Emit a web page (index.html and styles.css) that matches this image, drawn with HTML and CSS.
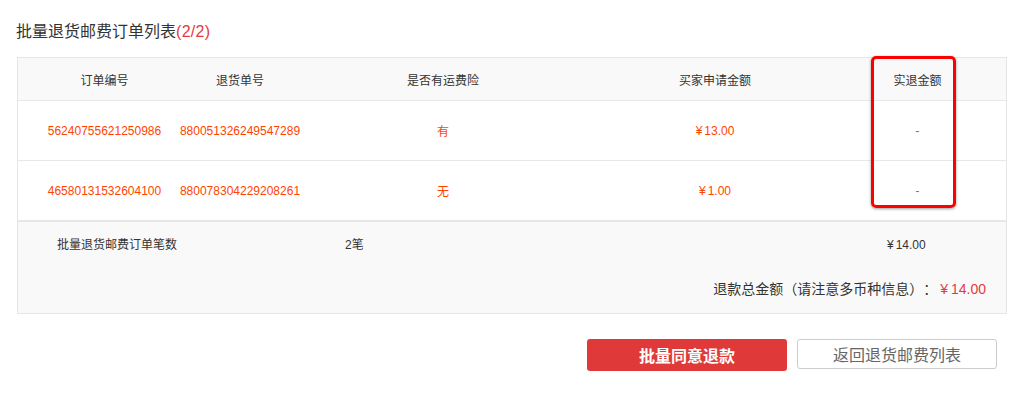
FILE: index.html
```html
<!DOCTYPE HTML>
<html>
	<head>
		<title>批量退货邮费订单列表</title>
		<meta charset="utf-8" />
		<link rel="stylesheet" href="styles.css">
	</head>
	<body>
		<div class="page">
			<h2 class="page-title">批量退货邮费订单列表<span class="count">(2/2)</span></h2>

			<div class="order-box">
				<table class="order-table">
					<thead>
						<tr>
							<th class="col-order">订单编号</th>
							<th class="col-return">退货单号</th>
							<th class="col-insure">是否有运费险</th>
							<th class="col-apply">买家申请金额</th>
							<th class="col-real">实退金额</th>
						</tr>
					</thead>
					<tbody>
						<tr>
							<td class="col-order">56240755621250986</td>
							<td>880051326249547289</td>
							<td>有</td>
							<td><span class="yen">¥</span>13.00</td>
							<td class="col-real">-</td>
						</tr>
						<tr>
							<td class="col-order">46580131532604100</td>
							<td>880078304229208261</td>
							<td>无</td>
							<td><span class="yen">¥</span>1.00</td>
							<td class="col-real">-</td>
						</tr>
					</tbody>
				</table>

				<div class="summary">
					<div class="summary-row">
						<span>批量退货邮费订单笔数</span>
						<span>2笔</span>
						<span><span class="yen">¥</span>14.00</span>
					</div>
					<div class="summary-total">退款总金额（请注意多币种信息）：<span class="money"><span class="yen">¥</span>14.00</span></div>
				</div>

				<!-- highlight around the refund column -->
				<div class="col-mark"></div>
			</div>

			<div class="actions">
				<button class="btn btn-primary">批量同意退款</button>
				<button class="btn btn-default">返回退货邮费列表</button>
			</div>
		</div>
	</body>
</html>
```

FILE: styles.css
```css
body {
	margin: 0;
	padding: 0;
	background: #fff;
	color: #333;
	font-family: "Liberation Sans", "Noto Sans CJK SC", sans-serif;
	font-size: 12px;
	text-spacing-trim: space-all;
}

.page {
	width: 990px;
	padding: 21px 0 0 17px;
}

.page-title {
	margin: 0 0 14px -1px;
	font-size: 16px;
	font-weight: normal;
	line-height: 22px;
	color: #333;
}

.page-title .count {
	color: #e4393c;
	letter-spacing: 0.3px;
}

.order-box {
	position: relative;
	border: 1px solid #e6e6e6;
}

.order-table {
	width: 100%;
	border-collapse: collapse;
	table-layout: fixed;
}

.order-table th {
	height: 42px;
	padding: 0;
	background: #f9f9f9;
	font-weight: normal;
	color: #333;
	border-bottom: 1px solid #e8e8e8;
}

.order-table td {
	height: 59px;
	padding: 0;
	text-align: center;
	color: #f40;
	border-bottom: 1px solid #e8e8e8;
}

.order-table tbody tr:last-child td {
	border-bottom: 2px solid #e6e6e6;
}

.order-table .col-order { width: 145px; padding-left: 14px; }
.order-table .col-return { width: 126px; }
.order-table .col-insure { width: 280px; }
.order-table .col-apply { width: 264px; }
.order-table .col-real { padding-right: 18px; }

.yen {
	margin-right: 2px;
}

.summary {
	background: #f9f9f9;
	padding: 13px 20px 14px 39px;
}

.summary-row {
	display: grid;
	grid-template-columns: 288px 542px auto;
	line-height: 20px;
}

.summary-total {
	margin-top: 24px;
	text-align: right;
	font-size: 14px;
	line-height: 20px;
}

.summary-total .money {
	color: #e4393c;
}

.summary-total .yen {
	margin-left: 3px;
	margin-right: 3px;
}

.col-mark {
	position: absolute;
	left: 853px;
	top: -2px;
	width: 79px;
	height: 146px;
	border: 3px solid #f00;
	border-radius: 5px;
	box-shadow: 0 1px 3px rgba(0, 0, 0, 0.4);
}

.actions {
	display: flex;
	justify-content: flex-end;
	align-items: flex-start;
	gap: 10px;
	margin-top: 25px;
	padding-right: 10px;
}

.btn {
	width: 200px;
	font-family: inherit;
	font-size: 16px;
	cursor: pointer;
	border-radius: 3px;
	padding: 0;
}

.btn-primary {
	height: 32px;
	background: #e0393a;
	border: none;
	color: #fff;
	font-weight: bold;
}

.btn-default {
	height: 30px;
	background: #fff;
	border: 1px solid #ccc;
	color: #666;
}
```
